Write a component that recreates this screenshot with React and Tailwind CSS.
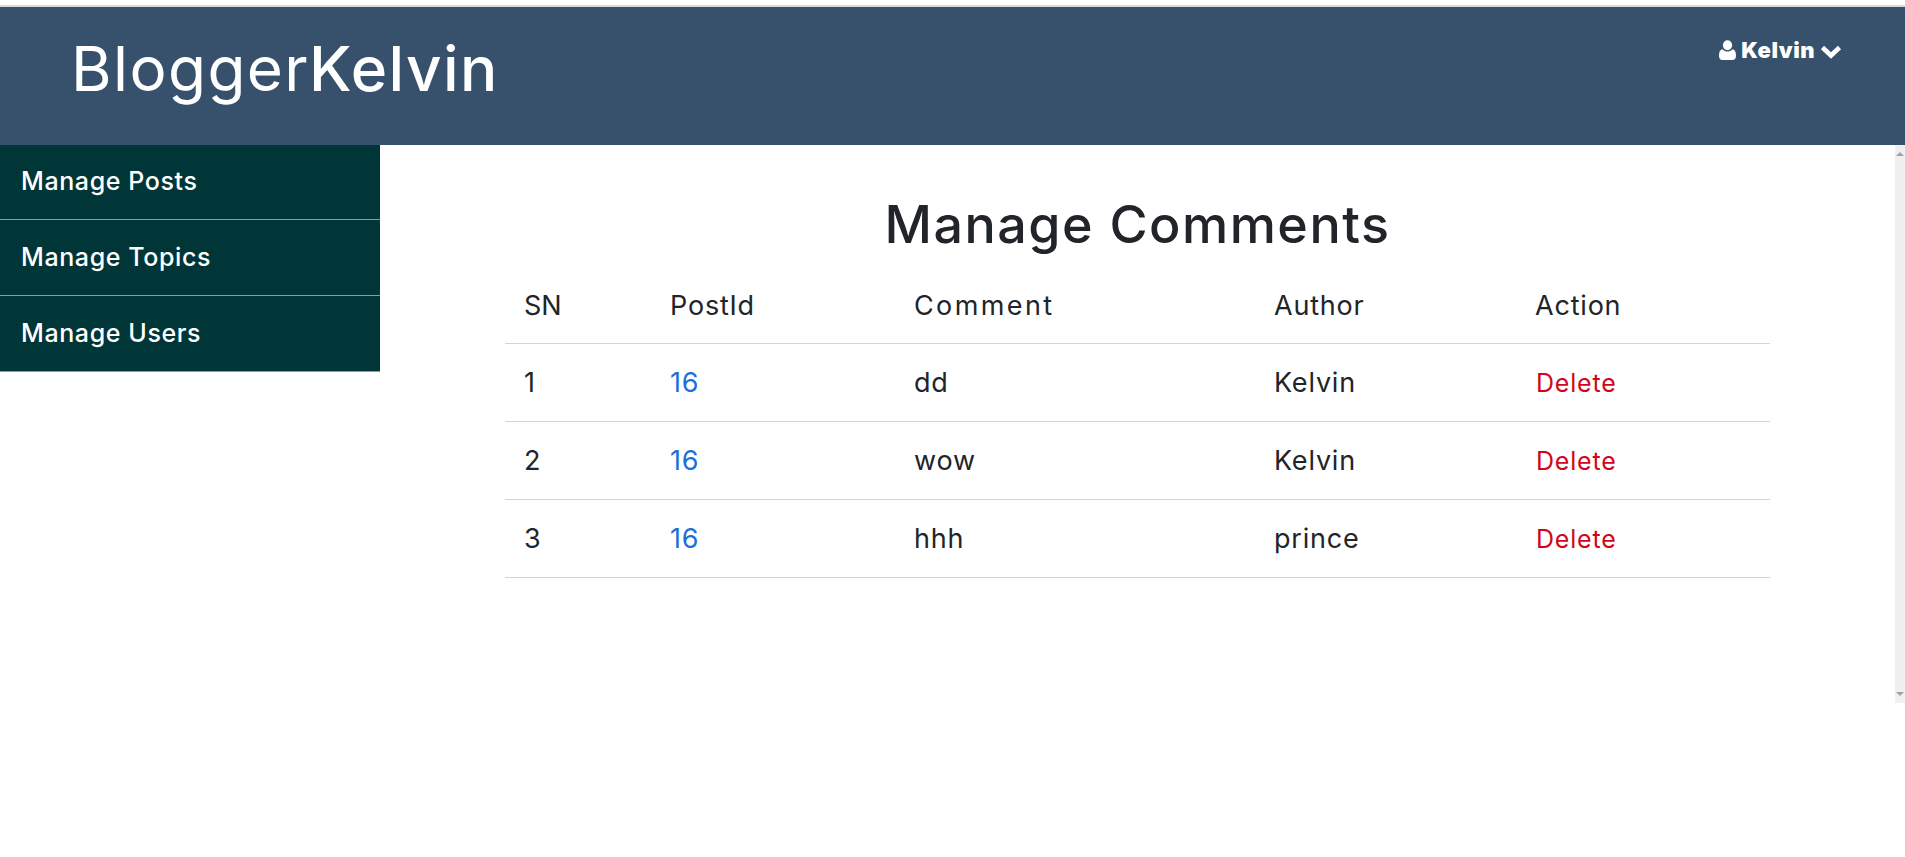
const comments = [
  { sn: 1, postId: 16, comment: 'dd', author: 'Kelvin' },
  { sn: 2, postId: 16, comment: 'wow', author: 'Kelvin' },
  { sn: 3, postId: 16, comment: 'hhh', author: 'prince' },
]

const links = ['Manage Posts', 'Manage Topics', 'Manage Users']

function UserIcon() {
  return (
    <svg viewBox="0 0 17 20" className="w-[17px] h-[20px]" fill="currentColor">
      <ellipse cx="8.5" cy="5.2" rx="4.6" ry="5" />
      <path d="M3.6 9.2C5 10.8 6.6 11.6 8.500 11.6s3.5-.8 4.9-2.4c2.3.4 3.6 2.4 3.6 6.6 0 2.8-1.3 4.2-3.4 4.2H3.4C1.3 20 0 18.6 0 15.8c0-4.2 1.3-6.2 3.6-6.6z" />
    </svg>
  )
}

function ChevronIcon() {
  return (
    <svg viewBox="0 0 22 15" className="w-[22px] h-[15px] mt-[2px]" fill="none" stroke="currentColor" strokeWidth="4.6">
      <path d="M2.5 3.5 11 11.5l8.500-8" />
    </svg>
  )
}

export default function App() {
  return (
    <div className="min-h-[857px] bg-white font-['Inter',sans-serif]">
      <div className="h-[5px] bg-white" />
      <div className="h-[2px] bg-[#d3d9dc]" />

      {/* Header */}
      <header className="h-[138px] bg-[#37516c] text-white flex justify-between pl-[71px] pr-[63px]">
        <h1 className="text-[62px] leading-[87px] mt-[18px] tracking-[1.4px]">
          Blogger<span className="font-medium">Kelvin</span>
        </h1>
        <div className="flex items-center gap-[5px] h-[22px] mt-[32px] text-[22px] font-black tracking-[0.5px]">
          <UserIcon />
          <span>Kelvin</span>
          <ChevronIcon />
        </div>
      </header>

      <div className="flex items-start">
        {/* Sidebar */}
        <nav className="w-[380px] shrink-0 bg-[#003638] text-white">
          {links.map((l) => (
            <a key={l} className="block h-[76px] first:h-[75px] first:pt-[19px] border-b border-[#73a8a8] pl-[21px] pt-[20px] text-[25px] leading-[34px] font-medium tracking-[0.6px]">
              {l}
            </a>
          ))}
        </nav>

        {/* Content */}
        <main className="flex-1 h-[558px]">
          <h2 className="text-[52px] leading-[75px] mt-[42px] text-center text-[#212529] font-medium tracking-[1.5px]">
            Manage Comments
          </h2>
          <table className="w-[1265px] mx-auto mt-[12px] table-fixed border-collapse text-[#212529] text-[27px] tracking-[0.8px]">
            <colgroup>
              <col className="w-[146px]" />
              <col className="w-[244px]" />
              <col className="w-[360px]" />
              <col className="w-[261px]" />
              <col />
            </colgroup>
            <thead>
              <tr className="h-[69px] border-b border-[#d4d4d4] text-left">
                <th className="pl-[19px] pb-[5px] font-normal tracking-normal">SN</th>
                <th className="pl-[19px] pb-[5px] font-normal">PostId</th>
                <th className="pl-[19px] pb-[5px] font-normal tracking-[2.4px]">Comment</th>
                <th className="pl-[19px] pb-[5px] font-normal">Author</th>
                <th className="pl-[19px] pb-[5px] font-normal">Action</th>
              </tr>
            </thead>
            <tbody>
              {comments.map((c) => (
                <tr key={c.sn} className="h-[78px] border-b border-[#d4d4d4]">
                  <td className="pl-[19px] pt-[2px]">{c.sn}</td>
                  <td className="pl-[19px] pt-[2px] text-[#1a6fd8]">{c.postId}</td>
                  <td className="pl-[19px] pt-[2px]">{c.comment}</td>
                  <td className="pl-[19px] pt-[2px]">{c.author}</td>
                  <td className="pl-[20px] pt-[3px] text-[#d1061a] text-[25px]">Delete</td>
                </tr>
              ))}
            </tbody>
          </table>
        </main>

        {/* Scrollbar */}
        <div className="w-[10px] h-[558px] shrink-0 bg-[#f0f0f0] flex flex-col justify-between items-center py-[7px]">
          <div className="w-0 h-0 border-x-[4px] border-x-transparent border-b-[4px] border-b-[#a3a3a3]" />
          <div className="w-0 h-0 border-x-[4px] border-x-transparent border-t-[4px] border-t-[#a3a3a3]" />
        </div>
      </div>
    </div>
  )
}
